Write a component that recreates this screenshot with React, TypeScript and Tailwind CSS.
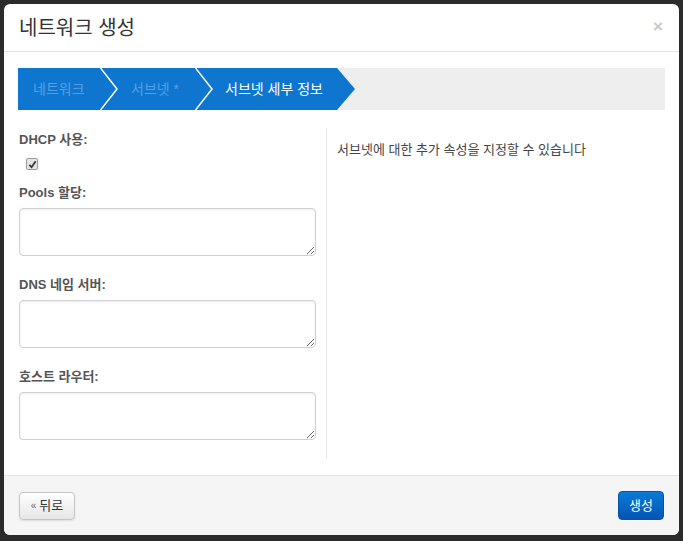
import React from 'react';

const font = { fontFamily: '"Liberation Sans", "Noto Sans CJK KR", sans-serif' };

const Chevron: React.FC = () => (
  <svg width="18" height="42" viewBox="0 0 18 42" className="shrink-0 bg-[#0f76cf]">
    <polyline points="0.5,0 17,21 0.5,42" fill="none" stroke="#ffffff" strokeWidth="1.5" />
  </svg>
);

const Field: React.FC<{ label: string }> = ({ label }) => (
  <div className="flex flex-col">
    <label className="h-5 leading-5 text-[13px] font-bold text-[#555] mb-[5px]">{label}</label>
    <textarea className="h-[48px] w-full rounded-[4px] border border-[#d0d0d0] shadow-[inset_0_1px_2px_rgba(0,0,0,0.08)] bg-white outline-none" />
  </div>
);

export default function App() {
  return (
    <div className="min-h-screen w-full bg-[#2b2b2b] p-[4px]" style={font}>
      <div className="w-[675px] h-[531px] bg-white rounded-[6px] flex flex-col overflow-hidden">
        {/* header */}
        <div className="h-[48px] shrink-0 border-b border-[#e5e5e5] flex items-center justify-between pl-[15px] pr-[16px]">
          <h3 className="text-[20px] text-[#333] leading-none">네트워크 생성</h3>
          <span className="text-[17px] font-bold text-[#c8c8c8] leading-none -mt-[2px]">×</span>
        </div>

        {/* body */}
        <div className="flex-1 px-[14px] pt-[16px]">
          <div className="h-[42px] bg-[#eeeeee] flex items-stretch">
            <div className="w-[82px] bg-[#0f76cf] pl-[15px] flex items-center text-[14px] text-[#55a0e2]">네트워크</div>
            <Chevron />
            <div className="w-[77px] bg-[#0f76cf] pl-[13px] flex items-center text-[14px] text-[#55a0e2]">서브넷 *</div>
            <Chevron />
            <div className="w-[124px] bg-[#0f76cf] pl-[12px] flex items-center text-[14px] text-white">서브넷 세부 정보</div>
            <svg width="18" height="42" viewBox="0 0 18 42" className="shrink-0">
              <polygon points="0,0 18,21 0,42" fill="#0f76cf" />
            </svg>
          </div>

          <div className="mt-[18px] h-[330px] flex">
            <div className="w-[309px] pl-[1px] pr-[10px] border-r border-[#e5e5e5] flex flex-col">
              <label className="mt-[2px] h-5 leading-5 text-[13px] font-bold text-[#555]">DHCP 사용:</label>
              <div className="mt-[8px] ml-[7px] w-[12px] h-[12px] rounded-[2px] border border-[#9a9a9a] bg-[#e4e4e4] flex items-center justify-center">
                <svg width="9" height="9" viewBox="0 0 10 10">
                  <path d="M1.5 5.5 L4 8 L8.5 1.5" fill="none" stroke="#333" strokeWidth="2" />
                </svg>
              </div>
              <div className="mt-[13px] flex flex-col gap-[19px]">
                <Field label="Pools 할당:" />
                <Field label="DNS 네임 서버:" />
                <Field label="호스트 라우터:" />
              </div>
            </div>
            <div className="flex-1 pl-[10px] pt-[12px] text-[13px] text-[#444] leading-5">
              서브넷에 대한 추가 속성을 지정할 수 있습니다
            </div>
          </div>
        </div>

        {/* footer */}
        <div className="h-[60px] shrink-0 border-t border-[#e5e5e5] bg-[#f5f5f5] flex items-center justify-between px-[15px]">
          <button className="h-[28px] w-[56px] rounded-[4px] border border-[#c5c5c5] bg-gradient-to-b from-white to-[#e6e6e6] shadow-[0_1px_2px_rgba(0,0,0,0.1)] text-[13px] text-[#333] flex items-center justify-center gap-[3px]">
            <span className="text-[10px] text-[#666]">«</span>뒤로
          </button>
          <button className="h-[29px] w-[46px] rounded-[4px] border border-[#0552a8] bg-gradient-to-b from-[#0a7ad8] to-[#0555b3] text-[13px] text-white flex items-center justify-center">
            생성
          </button>
        </div>
      </div>
    </div>
  );
}
